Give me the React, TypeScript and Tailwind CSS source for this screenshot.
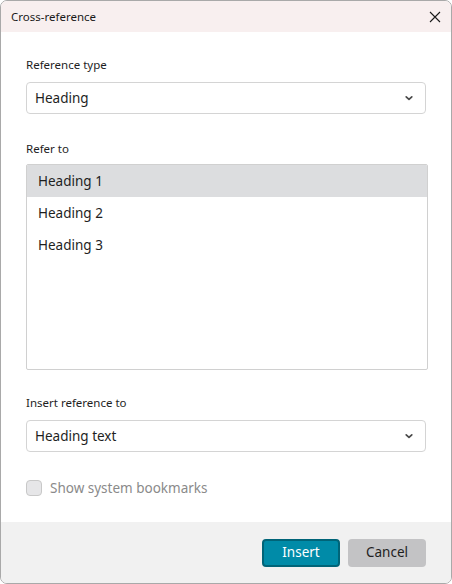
import React from "react";

const font = { fontFamily: '"Segoe UI", "Noto Sans", "Open Sans", sans-serif' };

function Chevron() {
  return (
    <svg width="10" height="10" viewBox="0 0 10 10" className="text-[#4a4a4a]">
      <path d="M2.2 3.8 L5 6.4 L7.8 3.8" fill="none" stroke="currentColor" strokeWidth="1.7" strokeLinecap="round" strokeLinejoin="round" />
    </svg>
  );
}

function Select({ value }: { value: string }) {
  return (
    <div className="h-[32px] w-[400px] rounded-[4px] border border-[#d4d4d4] bg-white flex items-center justify-between pl-[8px] pr-[11px]">
      <span className="text-[13.5px] text-[#1e1e1e] pt-[1px]">{value}</span>
      <Chevron />
    </div>
  );
}

export default function App() {
  return (
    <div
      className="w-[452px] h-[584px] border border-[#a9a9a9] rounded-[7px] overflow-hidden flex flex-col bg-white"
      style={font}
    >
      <div className="h-[31px] bg-[#f8efef] flex items-center justify-between pl-[10px] pr-[10px] shrink-0">
        <span className="text-[11.5px] text-[#1a1a1a]">Cross-reference</span>
        <svg width="12" height="12" viewBox="0 0 12 12">
          <path d="M1 1 L11 11 M11 1 L1 11" stroke="#1a1a1a" strokeWidth="1.1" />
        </svg>
      </div>
      <div className="flex-1 flex flex-col pl-[25px] pt-[25px]">
        <div className="text-[11.5px] text-[#1e1e1e] leading-[16px]">Reference type</div>
        <div className="mt-[9px]">
          <Select value="Heading" />
        </div>
        <div className="mt-[27px] text-[11.5px] text-[#1e1e1e] leading-[16px]">Refer to</div>
        <div className="mt-[7px] w-[402px] h-[206px] border border-[#d0d0d0] rounded-[2px] overflow-hidden flex flex-col">
          <div className="h-[32px] bg-[#dcdddf] flex items-center pl-[11px] pt-[1px] text-[13.5px] text-[#1e1e1e]">Heading 1</div>
          <div className="h-[32px] flex items-center pl-[11px] pt-[1px] text-[13.5px] text-[#1e1e1e]">Heading 2</div>
          <div className="h-[32px] flex items-center pl-[11px] pt-[1px] text-[13.5px] text-[#1e1e1e]">Heading 3</div>
        </div>
        <div className="mt-[25px] text-[11.5px] text-[#1e1e1e] leading-[16px]">Insert reference to</div>
        <div className="mt-[9px]">
          <Select value="Heading text" />
        </div>
        <div className="mt-[28px] h-[16px] flex items-center gap-[8px]">
          <div className="w-[16px] h-[16px] rounded-[4px] border border-[#c8c8c8] bg-[#e6e6e8]" />
          <span className="text-[13.5px] text-[#8a8a8a]">Show system bookmarks</span>
        </div>
      </div>
      <div className="h-[61px] bg-[#f1f1f1] flex items-center justify-end gap-[8px] pr-[25px] shrink-0">
        <button className="w-[78px] h-[28px] rounded-[4px] bg-[#008ba8] border-2 border-[#006478] text-white text-[13.5px]">
          Insert
        </button>
        <button className="w-[78px] h-[28px] rounded-[4px] bg-[#c3c3c5] text-[#1e1e1e] text-[13.5px]">
          Cancel
        </button>
      </div>
    </div>
  );
}
